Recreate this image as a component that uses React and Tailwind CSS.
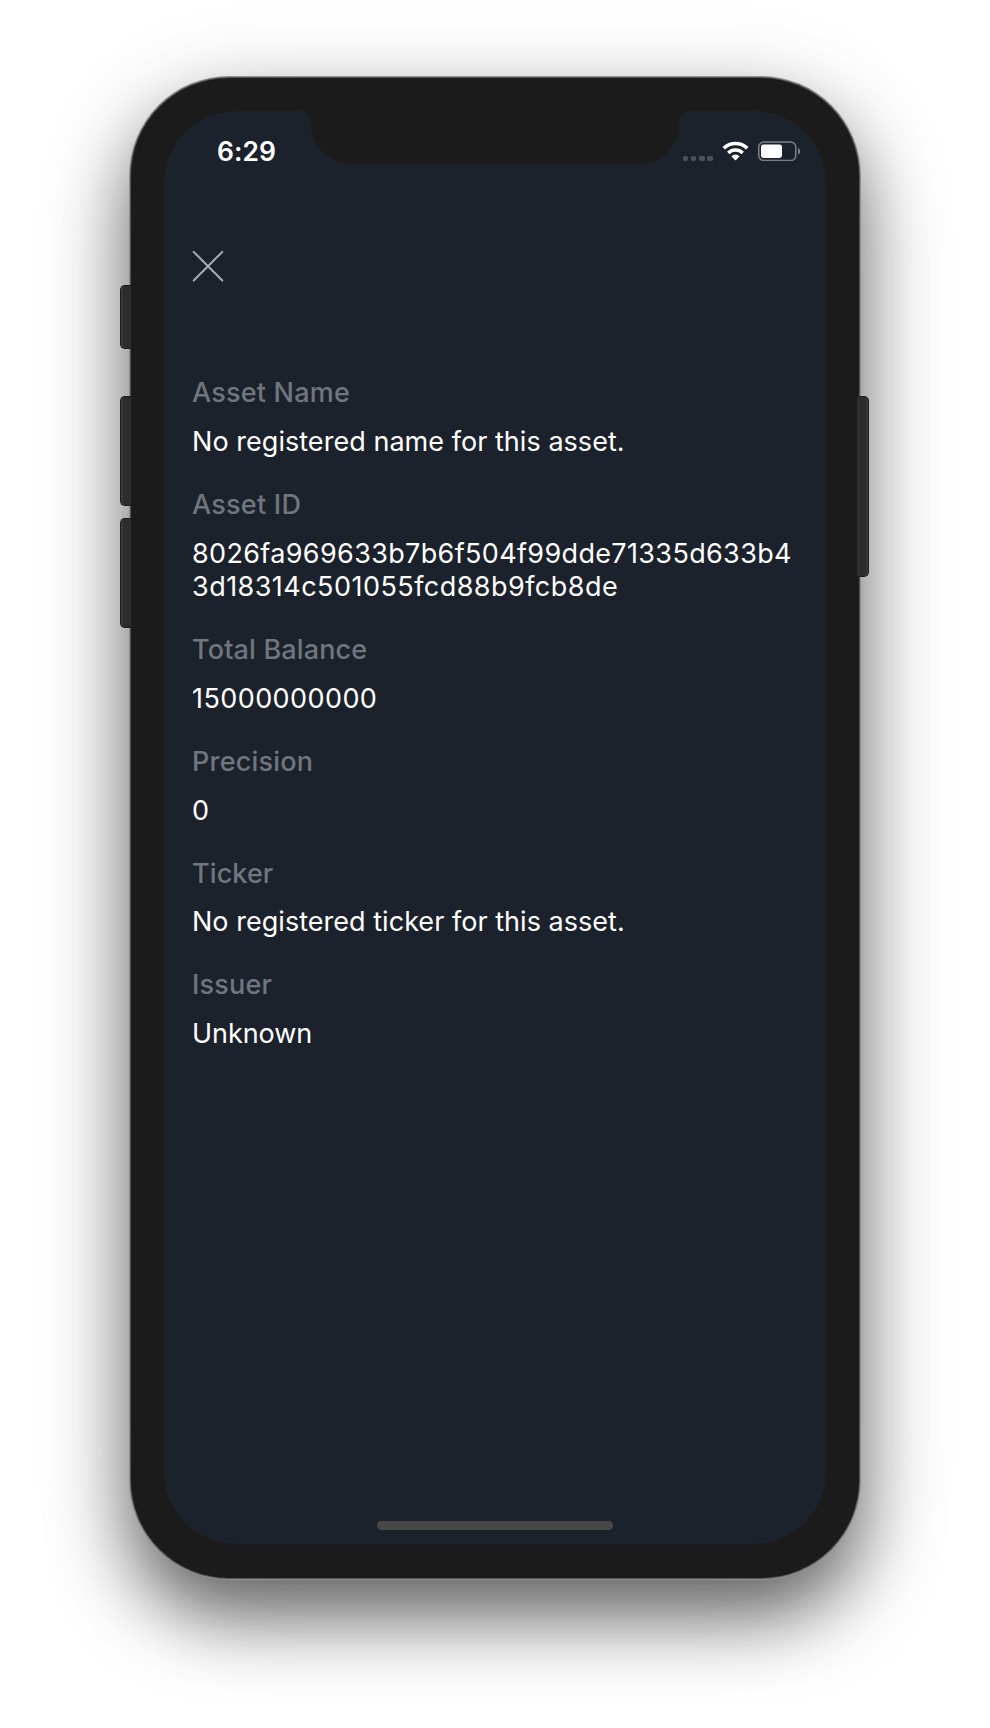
const assetDetails = [
  {
    label: "Asset Name",
    labelClass: "tracking-[0.2px]",
    lines: [{ text: "No registered name for this asset.", className: "tracking-[0.04px]" }],
  },
  {
    label: "Asset ID",
    labelClass: "tracking-[0.25px]",
    lines: [
      { text: "8026fa969633b7b6f504f99dde71335d633b4", className: "tracking-[0.35px]" },
      { text: "3d18314c501055fcd88b9fcb8de", className: "tracking-[0.46px]" },
    ],
  },
  {
    label: "Total Balance",
    labelClass: "tracking-[0.15px]",
    lines: [{ text: "15000000000", className: "tracking-[0.42px]" }],
  },
  {
    label: "Precision",
    labelClass: "tracking-[0.2px]",
    lines: [{ text: "0", className: "" }],
  },
  {
    label: "Ticker",
    labelClass: "tracking-[0.1px]",
    lines: [{ text: "No registered ticker for this asset.", className: "tracking-[0.03px]" }],
  },
  {
    label: "Issuer",
    labelClass: "tracking-[0.2px]",
    lines: [{ text: "Unknown", className: "tracking-[-0.05px]" }],
  },
];

function SideButton({ side, className }) {
  return (
    <div
      className={
        side === "left"
          ? `absolute -left-[11.5px] w-[11.5px] rounded-l-[5px] border border-r-0 border-[#1c1c1c] bg-[#2c2c2c] shadow-[inset_1.5px_0_0_#3c3c3c] ${className}`
          : `absolute -right-[9.5px] w-[12px] rounded-r-[5px] border border-l-0 border-[#1c1c1c] bg-[#2c2c2c] shadow-[inset_-1.5px_0_0_#3c3c3c] ${className}`
      }
    />
  );
}

function Notch() {
  return (
    <div className="absolute top-0 left-[137px] flex h-[53px] w-[388px] items-start">
      <div className="h-[10px] w-[10px] bg-[radial-gradient(circle_at_0_100%,transparent_9.5px,#1b1b1b_10px)]" />
      <div className="h-[53px] w-[368px] rounded-b-[40px] bg-[#1b1b1b]" />
      <div className="h-[10px] w-[10px] bg-[radial-gradient(circle_at_100%_100%,transparent_9.5px,#1b1b1b_10px)]" />
    </div>
  );
}

function WifiIcon() {
  return (
    <svg className="h-[20px] w-[27px]" viewBox="0 0 27 20" fill="none">
      <path d="M1.7 7.3 A16.8 16.8 0 0 1 25.3 7.3" stroke="white" strokeWidth="3.6" />
      <path d="M6.3 12 A10.3 10.3 0 0 1 20.7 12" stroke="white" strokeWidth="3.5" />
      <path d="M9.4 15.2 Q13.5 11.8 17.6 15.2 L14.1 18.9 Q13.5 19.5 12.9 18.9 Z" fill="white" />
    </svg>
  );
}

function BatteryIcon() {
  return (
    <svg className="h-[20px] w-[43px]" viewBox="0 0 43 20" fill="none">
      <rect x="0.75" y="0.95" width="37" height="18.5" rx="5" stroke="#7b8087" strokeWidth="1.5" />
      <rect x="3" y="3.5" width="21" height="13.4" rx="2.4" fill="white" />
      <path d="M40 7 C42.8 8 42.8 12.6 40 13.6 Z" fill="#7b8087" />
    </svg>
  );
}

function StatusBar() {
  return (
    <div className="flex h-[70px] items-start justify-between pt-[28px] pr-[25px] pl-[53px]">
      <div className="text-[26.4px] leading-[24px] font-semibold tracking-[0.1px] text-white">6:29</div>
      <div className="flex items-start pt-[2px]">
        <div className="mt-[14.5px] flex gap-[2.7px]">
          {[0, 1, 2, 3].map((dot) => (
            <div key={dot} className="size-[5.6px] rounded-[1.8px] bg-[#4c525b]" />
          ))}
        </div>
        <div className="ml-[9px]">
          <WifiIcon />
        </div>
        <div className="ml-[9px]">
          <BatteryIcon />
        </div>
      </div>
    </div>
  );
}

function DetailField({ label, labelClass, lines }) {
  return (
    <div className="flex flex-col gap-[15.2px] text-[27px] leading-[33.6px] whitespace-nowrap">
      <div className={`font-medium text-[#70757e] ${labelClass}`}>{label}</div>
      <div className="text-white">
        {lines.map((line) => (
          <div key={line.text} className={line.className}>
            {line.text}
          </div>
        ))}
      </div>
    </div>
  );
}

export default function App() {
  return (
    <div className="flex h-[1728px] w-[990px] items-start justify-center overflow-hidden bg-white pt-[78px] font-['Inter','Liberation_Sans',sans-serif]">
      <div className="relative h-[1500px] w-[728px] rounded-[98px] bg-[#1b1b1b] p-[33px] shadow-[0_0_0_1px_#555555,0_0_0_2px_#8f8f8f,0_38px_74px_rgba(0,0,0,0.58),0_20px_110px_rgba(0,0,0,0.12)]">
        <SideButton side="left" className="top-[207px] h-[64px]" />
        <SideButton side="left" className="top-[318px] h-[110px]" />
        <SideButton side="left" className="top-[440px] h-[110px]" />
        <SideButton side="right" className="top-[318px] h-[181px]" />

        <div className="relative flex h-[1433px] w-[662px] flex-col overflow-hidden rounded-[72px] bg-[#1c222c]">
          <Notch />
          <StatusBar />
          <button type="button" aria-label="Close" className="mt-[69px] ml-[28px] size-[32px]">
            <svg className="size-[32px]" viewBox="0 0 32 32" fill="none">
              <path d="M1.7 1.9 L30.3 30.5 M30.3 1.9 L1.7 30.5" stroke="#a9acb2" strokeWidth="2" strokeLinecap="round" />
            </svg>
          </button>
          <div className="mt-[94px] flex flex-1 flex-col gap-[29.4px] pl-[28px]">
            {assetDetails.map((field) => (
              <DetailField key={field.label} {...field} />
            ))}
          </div>
          <div className="mb-[14.5px] h-[9px] w-[236px] self-center rounded-full bg-[#474747]" />
        </div>
      </div>
    </div>
  );
}
